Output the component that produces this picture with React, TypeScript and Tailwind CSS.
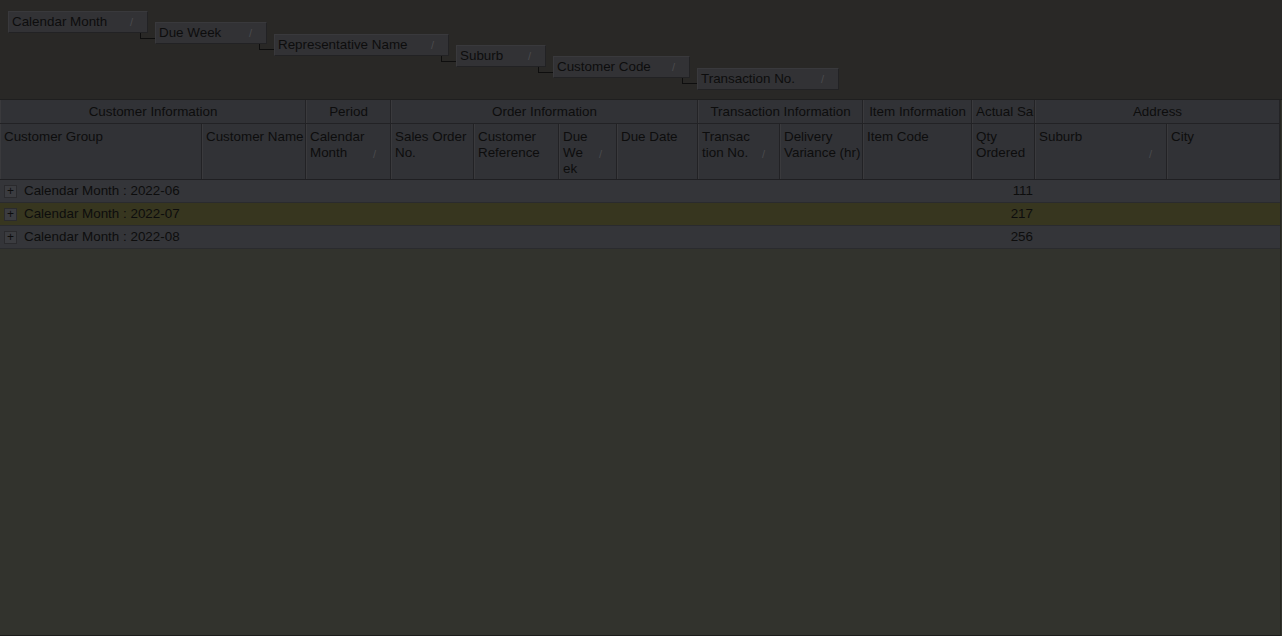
import React from "react";

const cols = "grid-cols-[202px_104px_85px_83px_85px_58px_81px_82px_83px_109px_63px_132px_113px]";

const chips = [
  { label: "Calendar Month", w: 140 },
  { label: "Due Week", w: 112 },
  { label: "Representative Name", w: 175 },
  { label: "Suburb", w: 90 },
  { label: "Customer Code", w: 137 },
  { label: "Transaction No.", w: 142 },
];

function Sort({ className = "" }: { className?: string }) {
  return <span className={"text-[11px] text-[#4a4a4d] leading-none " + className}>/</span>;
}

function Chip({ label, w }: { label: string; w: number }) {
  return (
    <div
      className="h-[22px] flex items-center justify-between pl-[3px] pr-[14px] bg-[#323235] border-r border-b border-[#222224] border-t border-l border-t-[#39393c] border-l-[#39393c]"
      style={{ width: w }}
    >
      <span>{label}</span>
      <Sort />
    </div>
  );
}

function GroupPanel() {
  let x = 8;
  const items: { label: string; w: number; left: number; top: number }[] = [];
  chips.forEach((c, i) => {
    items.push({ ...c, left: x, top: 11 + i * 11.3 });
    x = x + c.w + 7;
  });
  return (
    <div className="relative h-[100px] bg-[#292826] border-b border-[#1f1f1f]">
      {items.map((it, i) => (
        <React.Fragment key={i}>
          {i > 0 && (
            <div
              className="absolute border-l border-b border-[#0e0e0e]"
              style={{
                left: items[i - 1].left + items[i - 1].w - 8,
                top: Math.round(items[i - 1].top) + 22,
                width: 15,
                height: 6,
              }}
            />
          )}
          <div className="absolute" style={{ left: it.left, top: Math.round(it.top) }}>
            <Chip label={it.label} w={it.w} />
          </div>
        </React.Fragment>
      ))}
    </div>
  );
}

const bands = [
  { label: "Customer Information", span: "col-span-2 justify-center" },
  { label: "Period", span: "col-span-1 justify-center" },
  { label: "Order Information", span: "col-span-4 justify-center" },
  { label: "Transaction Information", span: "col-span-2 justify-center" },
  { label: "Item Information", span: "col-span-1 justify-center" },
  { label: "Actual Sales", span: "col-span-1 justify-start pl-[3px]" },
  { label: "Address", span: "col-span-2 justify-center" },
];

const headers: { label: React.ReactNode; sort?: boolean; right?: boolean }[] = [
  { label: "Customer Group" },
  { label: "Customer Name", right: true },
  { label: <>Calendar<br />Month</>, sort: true },
  { label: <>Sales Order<br />No.</> },
  { label: <>Customer<br />Reference</> },
  { label: <>Due<br />We<br />ek</>, sort: true },
  { label: "Due Date" },
  { label: <>Transac<br />tion No.</>, sort: true },
  { label: <>Delivery<br />Variance (hr)</> },
  { label: "Item Code" },
  { label: <>Qty<br />Ordered</> },
  { label: "Suburb", sort: true },
  { label: "City" },
];

const rows = [
  { m: "2022-06", q: "111", hl: false },
  { m: "2022-07", q: "217", hl: true },
  { m: "2022-08", q: "256", hl: false },
];

export default function App() {
  return (
    <div
      className="w-[1282px] h-[636px] overflow-hidden flex flex-col bg-[#32332d] text-[#0d0d0d] text-[13.4px] leading-[16px]"
      style={{ fontFamily: '"Liberation Sans", Arial, sans-serif' }}
    >
      <GroupPanel />
      <div className="flex-1 flex flex-col bg-[#32332d] border-b border-[#1c1c1a] w-[1281px] border-r border-r-[#26261f]">
        <div className={"grid " + cols + " h-[24px] bg-[#313236] border-b border-[#222225]"}>
          {bands.map((b, i) => (
            <div
              key={i}
              className={b.span + " flex items-center whitespace-nowrap overflow-hidden border-r border-[#232326] border-l border-l-[#3a3a3d]"}
            >
              {b.label}
            </div>
          ))}
        </div>
        <div className={"grid " + cols + " h-[56px] bg-[#313236] border-b border-[#1f1f22]"}>
          {headers.map((h, i) => (
            <div
              key={i}
              className={
                "relative overflow-hidden pt-[5px] px-[3px] whitespace-nowrap border-r border-[#222225] border-l border-l-[#3a3a3d] " +
                (h.right ? "text-right" : "")
              }
            >
              {h.label}
              {h.sort && <Sort className="absolute right-[14px] top-[25px]" />}
            </div>
          ))}
        </div>
        {rows.map((r, i) => (
          <div
            key={i}
            className={
              "grid " + cols + " h-[23px] border-b border-[#2a2b2e] " +
              (r.hl ? "bg-[#37361f]" : "bg-[#343539]")
            }
          >
            <div className="col-span-10 flex items-center pl-[4px] gap-[7px] whitespace-nowrap">
              <div className="w-[13px] h-[13px] flex items-center justify-center bg-[#3b3c40] border border-[#2a2a2d] text-[12px] leading-none">
                +
              </div>
              <span>Calendar Month : {r.m}</span>
            </div>
            <div className="flex items-center justify-end pr-[2px]">{r.q}</div>
            <div className="col-span-2" />
          </div>
        ))}
      </div>
    </div>
  );
}
